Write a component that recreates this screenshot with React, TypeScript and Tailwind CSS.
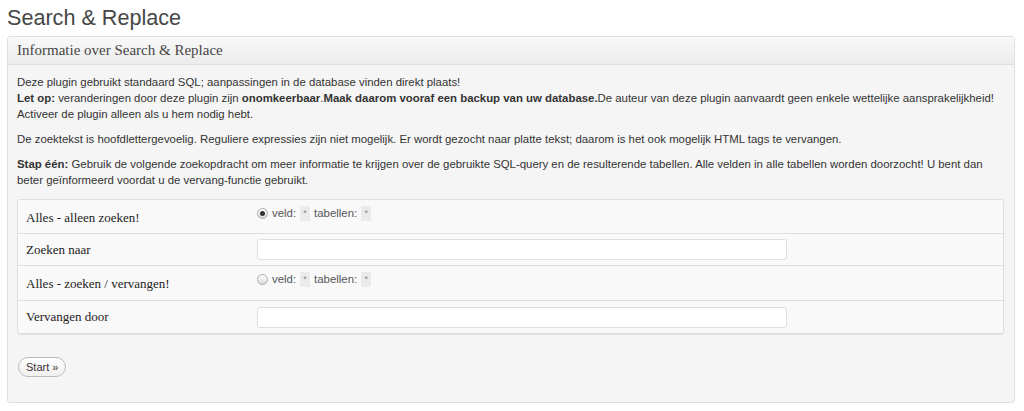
import React from 'react';

const sans = { fontFamily: '"Liberation Sans", Arial, sans-serif' };
const serif = { fontFamily: '"Liberation Serif", Georgia, serif' };

function Radio({ checked }: { checked?: boolean }) {
  return (
    <span className="inline-flex h-[11px] w-[11px] items-center justify-center rounded-full border border-[#a9a9a9] bg-gradient-to-b from-[#ffffff] to-[#dcdcdc]">
      {checked && <span className="h-[5px] w-[5px] rounded-full bg-[#333]" />}
    </span>
  );
}

function Star() {
  return (
    <span className="inline-flex h-[15px] w-[10px] items-center justify-center bg-[#ebebeb] text-[9px] text-[#888]">*</span>
  );
}

function ScopeChoice({ checked }: { checked?: boolean }) {
  return (
    <div className="flex items-center gap-[4px] text-[11.4px] text-[#555]" style={sans}>
      <Radio checked={checked} />
      <span>veld:</span>
      <Star />
      <span>tabellen:</span>
      <Star />
    </div>
  );
}

function Label({ children, top }: { children: React.ReactNode; top?: boolean }) {
  return (
    <div className={`w-[239px] shrink-0 pl-[8px] text-[13px] text-[#222] ${top ? 'pt-[10px]' : ''}`} style={serif}>
      {children}
    </div>
  );
}

export default function App() {
  return (
    <div className="min-h-[411px] bg-white pl-[7px] pr-[9px]" style={sans}>
      <h2 className="pt-[5px] pb-[6px] text-[21.6px] leading-[25px] text-[#464646]">Search &amp; Replace</h2>

      <div className="rounded-[3px] border border-[#dfdfdf] bg-[#f5f5f5]">
        <div className="flex h-[28px] items-center border-b border-[#dfdfdf] bg-gradient-to-b from-[#f9f9f9] to-[#ececec] px-[9px] text-[15px] text-[#464646]" style={serif}>
          Informatie over Search &amp; Replace
        </div>

        <div className="px-[9px] pt-[9px] pb-[25px] text-[11.4px] leading-[16px] text-[#333]">
          <p>
            Deze plugin gebruikt standaard SQL; aanpassingen in de database vinden direkt plaats!
            <br />
            <strong>Let op:</strong> veranderingen door deze plugin zijn <strong>onomkeerbaar</strong>.
            <strong>Maak daarom vooraf een backup van uw database.</strong>De auteur van deze plugin aanvaardt geen enkele wettelijke aansprakelijkheid!
            <br />
            Activeer de plugin alleen als u hem nodig hebt.
          </p>
          <p className="mt-[9px]">
            De zoektekst is hoofdlettergevoelig. Reguliere expressies zijn niet mogelijk. Er wordt gezocht naar platte tekst; daarom is het ook mogelijk HTML tags te vervangen.
          </p>
          <p className="mt-[9px]">
            <strong>Stap één:</strong> Gebruik de volgende zoekopdracht om meer informatie te krijgen over de gebruikte SQL-query en de resulterende tabellen. Alle velden in alle tabellen worden doorzocht! U bent dan beter geïnformeerd voordat u de vervang-functie gebruikt.
          </p>

          <div className="mt-[11px] mr-[1px] rounded-[3px] border border-[#dfdfdf] bg-[#f9f9f9] shadow-[0_1px_1px_rgba(0,0,0,0.08)]">
            <div className="flex h-[34px] border-b border-[#dfdfdf]">
              <Label top>Alles - alleen zoeken!</Label>
              <div className="pt-[5px]"><ScopeChoice checked /></div>
            </div>
            <div className="flex h-[32px] items-center border-b border-[#dfdfdf]">
              <Label>Zoeken naar</Label>
              <input className="h-[21px] w-[530px] rounded-[3px] border border-[#dfdfdf] bg-white px-[4px] text-[12px] outline-none" />
            </div>
            <div className="flex h-[35px] border-b border-[#dfdfdf]">
              <Label top>Alles - zoeken / vervangen!</Label>
              <div className="pt-[5px]"><ScopeChoice /></div>
            </div>
            <div className="flex h-[32px] items-center">
              <Label>Vervangen door</Label>
              <input className="h-[21px] w-[530px] rounded-[3px] border border-[#dfdfdf] bg-white px-[4px] text-[12px] outline-none" />
            </div>
          </div>

          <button className="mt-[23px] ml-[1px] h-[20px] rounded-full border border-[#bbb] bg-gradient-to-b from-[#fefefe] to-[#f0f0f0] px-[7px] text-[11px] leading-[18px] text-[#333]">
            Start »
          </button>
        </div>
      </div>
    </div>
  );
}
